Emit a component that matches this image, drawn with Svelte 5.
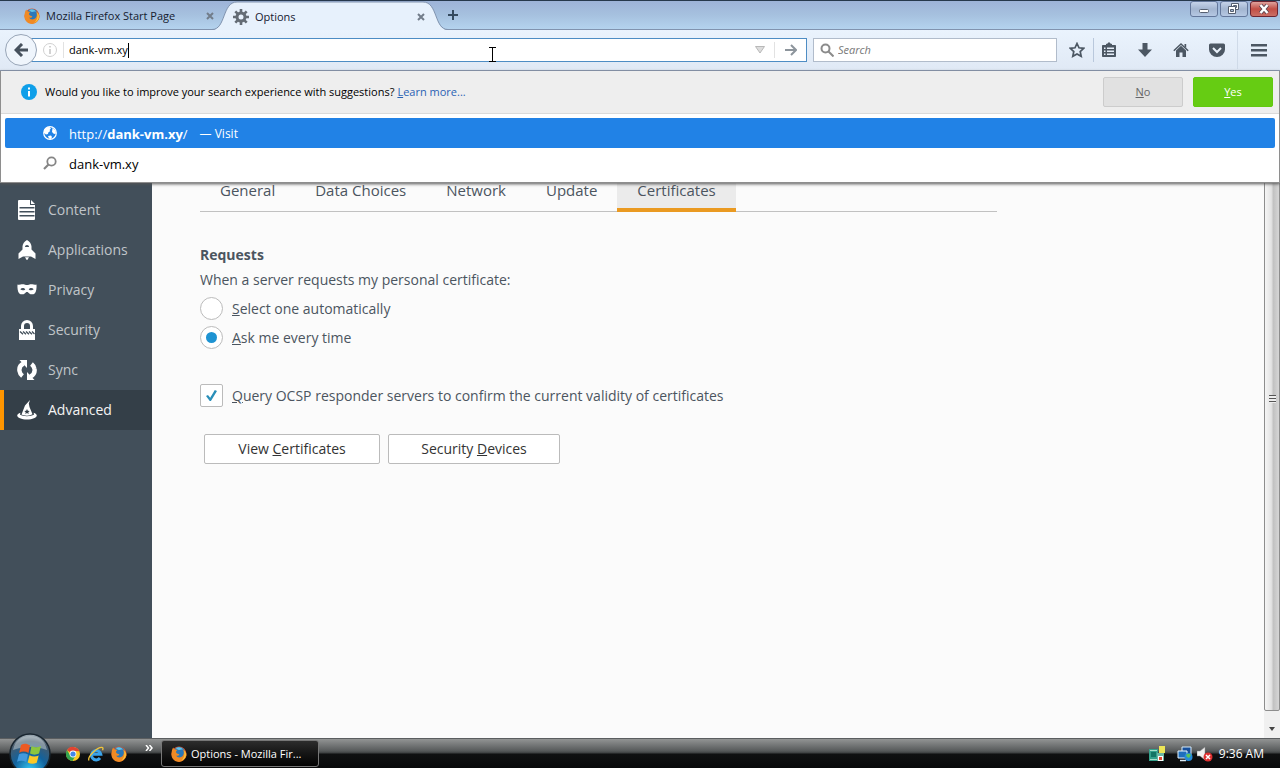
<script lang="ts">
	// Preference categories in the sidebar
	const categories = [
		{ id: 'content', label: 'Content' },
		{ id: 'applications', label: 'Applications' },
		{ id: 'privacy', label: 'Privacy' },
		{ id: 'security', label: 'Security' },
		{ id: 'sync', label: 'Sync' },
		{ id: 'advanced', label: 'Advanced' }
	];
	const panes = ['General', 'Data Choices', 'Network', 'Update', 'Certificates'];

	let category = $state('advanced');
	let pane = $state('Certificates');
	let address = $state('dank-vm.xy');
	let search = $state('');
	let certChoice = $state('ask');
	let ocsp = $state(true);
</script>

{#snippet firefox()}
	<svg class="firefox" viewBox="0 0 16 16" aria-hidden="true">
		<circle cx="8" cy="8" r="7.5" fill="#e4572a" />
		<circle cx="8.2" cy="6.7" r="5.8" fill="#2b78b8" />
		<path d="M5 2c3-1.500 6-.5 7 2-2-1-3 .2-4 0S5.500 3 5 2z" fill="#62c3e8" />
		<path d="M.6 7C.8 4 1.500 2.500 2.300 1.600c.2 1 .7 1.400 1.300 1.700 1 .2 2 .2 2.700.8-.7.600-1.500 1.200-1.200 2.400.4 1.400 2.500 1 3.200 1.900-.5 1.500-2.300 1.600-3.300 1.200 1.500 2.500 5 2.400 6.800.2 1.500-2 1.200-4.500.1-6.600 2.500 1.600 3.900 4 3.500 6.600A7.500 7.500 0 0 1 .6 7z" fill="#f08a24" />
		<path d="M13 4.300c2 2 2.600 5 .9 7.500-1 1.500-2.300 2.500-4 3 3-2 4.500-5.500 3.100-10.500z" fill="#fbc93c" />
	</svg>
{/snippet}

{#snippet categoryIcon(id: string)}
	<svg class="cat-icon" viewBox="0 0 20 20" fill="currentColor" aria-hidden="true">
		{#if id === 'content'}
			<path d="M2 0h11v5h5v14a1 1 0 0 1-1 1H2a1 1 0 0 1-1-1V1a1 1 0 0 1 1-1zM2.500 7v1.500h15V7zm0 4v1.500h15V11zm0 4v1.500h15V15z" fill-rule="evenodd" />
			<path d="M14 0l4 4h-4z" />
		{:else if id === 'applications'}
			<path d="M10 0c2.500 1.400 4.500 4 4.500 6.500V9.500l4 4V19L14 16.500H6L1.500 19v-5.500l4-4V6.500C5.500 4 7.500 1.400 10 0z" />
			<path d="M8 7c0-1.300.8-2 2-2s2 .7 2 2z" fill="#424f5a" />
			<path d="M8 17.300h4l-2 3.200z" />
		{:else if id === 'privacy'}
			<path fill-rule="evenodd" d="M.5 4.500c1.300.6 2 .2 4-.2C7 3.900 8.500 5 10 5s3-1.100 5.500-.7c2 .4 2.700.8 4 .2.3 3-.2 7.200-1.600 8.700-1.500 1.500-4.300 1.500-5.600.3-.9-.9-1.300-1.500-2.300-1.500s-1.400.6-2.300 1.500c-1.300 1.200-4.100 1.200-5.600-.3C.7 11.700.2 7.500.5 4.500zM3.300 9.200c1.400 1.500 3.400 1.500 5 .2C7 7.500 4.800 7.400 3.300 9.200zm8.400.2c1.600 1.300 3.600 1.300 5-.2-1.500-1.800-3.700-1.700-5 .2z" />
		{:else if id === 'security'}
			<path fill-rule="evenodd" d="M4 9V6a6 6 0 0 1 12 0v3h2v11H2V9zm3 0h6V6a3 3 0 0 0-6 0z" />
			<path d="M3 11.500l3 2.800m0-2.800l3 2.800m0-2.800l3 2.800m0-2.800l3 2.800m0-2.800l2.500 2.500" stroke="#424f5a" stroke-width="1.300" fill="none" />
		{:else if id === 'sync'}
			<path d="M6.500 3.500C3.500 5 2 8 2.500 11c.3 2.300 1.500 3.800 3 5M13.500 16.500c3-1.500 4.500-4.500 4-7.500-.3-2.300-1.500-3.800-3-5" fill="none" stroke="currentColor" stroke-width="4.400" />
			<path d="M2.500 0H10v8zM17.500 20H10v-8z" />
		{:else}
			<path d="M13 0l-1.200 3.600.7 3.400 3 7.300c-2.700 1.800-8.200 1.700-11 .2L8 5.500z" />
			<path d="M3.500 12.800c-2 .6-3.300 1.600-3.300 2.700C.2 17.500 4.500 19.500 10 19.500s9.800-2 9.800-4c0-1.100-1.200-2-3.200-2.700l.5 1.600c-3.500 2.300-10.700 2.300-14.200 0z" />
			<path d="M10 9l.8 1.700 1.900.2-1.400 1.300.4 1.900-1.700-1-1.700 1 .4-1.900-1.400-1.300 1.900-.2z" fill="#343f48" />
		{/if}
	</svg>
{/snippet}

<div class="desktop">
	<header class="titlebar">
		<div class="tab">
			{@render firefox()}
			<span class="tab-title">Mozilla Firefox Start Page</span>
			<button class="tab-close" aria-label="Close tab">
				<svg viewBox="0 0 8 8"><path d="M1 1l6 6M7 1L1 7" /></svg>
			</button>
		</div>
		<div class="tab active">
			<svg class="tab-shape" viewBox="0 0 236 29" preserveAspectRatio="none" aria-hidden="true">
				<path d="M0 29C14 29 10 1 25 1H211C226 1 222 29 236 29Z" fill="#e7f1fc" />
				<path d="M0 28.500C14 28.500 10 1 25 1H211C226 1 222 28.500 236 28.500" fill="none" stroke="#8193ae" />
			</svg>
			<svg class="gear" viewBox="0 0 16 16" aria-hidden="true">
				<circle cx="8" cy="8" r="4" fill="none" stroke="#646c75" stroke-width="3" />
				<path d="M8 0v3.500M8 12.500V16M0 8h3.500M12.500 8H16M2.300 2.300l2.500 2.500M11.200 11.200l2.500 2.500M2.300 13.700l2.500-2.500M11.200 4.800l2.500-2.500" stroke="#646c75" stroke-width="2.600" />
			</svg>
			<span class="tab-title">Options</span>
			<button class="tab-close" aria-label="Close tab">
				<svg viewBox="0 0 8 8"><path d="M1 1l6 6M7 1L1 7" /></svg>
			</button>
		</div>
		<button class="new-tab" aria-label="Open a new tab">
			<svg viewBox="0 0 10 10"><path d="M5 0v10M0 5h10" /></svg>
		</button>
		<div class="window-buttons">
			<button aria-label="Minimize">
				<svg viewBox="0 0 26 14"><rect x="8.500" y="7.500" width="9" height="3" rx="1" fill="#fff" stroke="#555f70" /></svg>
			</button>
			<button aria-label="Restore">
				<svg viewBox="0 0 26 14" fill="#fff" stroke="#555f70">
					<path d="M10.500 1.500h7v6h-7zM12.500 3.500h3v2h-3z" fill-rule="evenodd" />
					<path d="M7.500 4.500h7v7h-7zM9.500 7.500h3v2h-3z" fill-rule="evenodd" />
				</svg>
			</button>
			<button class="close" aria-label="Close">
				<svg viewBox="0 0 26 14">
					<path d="M9.500 3l7 8M16.500 3l-7 8" stroke="#51404d" stroke-width="4" />
					<path d="M9.500 3l7 8M16.500 3l-7 8" stroke="#fff" stroke-width="2.500" />
				</svg>
			</button>
		</div>
	</header>

	<nav class="toolbar">
		<button class="back" aria-label="Go back">
			<svg viewBox="0 0 14 14"><path d="M8 1L2 7l6 6M2 7h12" /></svg>
		</button>
		<div class="urlbar">
			<svg class="identity" viewBox="0 0 14 14" aria-hidden="true">
				<circle cx="7" cy="7" r="6.500" fill="none" stroke="#d0d0d0" />
				<path d="M7 6v5M7 3v1.500" stroke="#c4c4c4" stroke-width="1.500" />
			</svg>
			<div class="url-field">
				<input type="text" class="address" size="10" aria-label="Address" bind:value={address} />
				<span class="caret"></span>
			</div>
			<button class="history" aria-label="Show history">
				<svg viewBox="0 0 10 8"><path d="M.5.5h9L5 7z" fill="#ddd" stroke="#b8b8b8" /></svg>
			</button>
			<button class="go" aria-label="Go">
				<svg viewBox="0 0 12 12"><path d="M6 1l5 5-5 5M0 6h11" /></svg>
			</button>
			<svg class="pointer" viewBox="0 0 9 17" aria-hidden="true">
				<path d="M1 1.500h7M1 15.500h7M4.500 2v13" stroke="#000" />
			</svg>
		</div>
		<div class="searchbar">
			<svg viewBox="0 0 14 14" aria-hidden="true"><circle cx="5.500" cy="5.500" r="4" /><path d="M8.500 8.500l5 5" /></svg>
			<input type="text" placeholder="Search" aria-label="Search" bind:value={search} />
		</div>
		<div class="tools">
			<button class="tool star" aria-label="Bookmark this page">
				<svg viewBox="0 0 16 16"><path d="M8 1.500l2 4.300 4.700.5-3.500 3.200 1 4.800L8 11.900l-4.200 2.400 1-4.800L1.300 6.300 6 5.800z" fill="none" stroke="#4c5763" stroke-width="1.700" /></svg>
			</button>
			<button class="tool bookmarks" aria-label="Show your bookmarks">
				<svg viewBox="0 0 16 16"><path fill-rule="evenodd" d="M5 2l1.500-.5L8 0l1.500 1.500L11 2v1h3.200a.8.800 0 0 1 .8.800v10.400a.8.800 0 0 1-.8.800H1.800a.8.800 0 0 1-.8-.8V3.800A.8.800 0 0 1 1.800 3H5zM3 5.500V7h1.500V5.500zm3 0V7h7V5.500zm-3 3V10h1.500V8.500zm3 0V10h7V8.500zm-3 3V13h1.500v-1.500zm3 0V13h7v-1.500z" /></svg>
			</button>
			<button class="tool" aria-label="Downloads">
				<svg viewBox="0 0 16 16"><path d="M5.500 1h5v6.500H15L8 15 1 7.500h4.500z" /></svg>
			</button>
			<button class="tool" aria-label="Home">
				<svg viewBox="0 0 16 16"><path d="M8 3.800l5 4.700V15H9.500v-4.500h-3V15H3V8.500z" /><path d="M.8 8.800L8 2l7.200 6.800" fill="none" stroke="#4c5763" stroke-width="1.500" /><path d="M11.500 2h1.700v4l-1.700-1.500z" /></svg>
			</button>
			<button class="tool" aria-label="Save to Pocket">
				<svg viewBox="0 0 16 16"><path d="M1.500 1.500h13A1.500 1.500 0 0 1 16 3v4.500a8 7.500 0 0 1-16 0V3a1.500 1.500 0 0 1 1.500-1.500z" /><path d="M4 6l4 4 4-4" fill="none" stroke="#eaf2fb" stroke-width="2" /></svg>
			</button>
			<button class="tool menu" aria-label="Open menu">
				<svg viewBox="0 0 16 16"><path d="M0 2h16v2.500H0zM0 7h16v2.500H0zM0 12h16v2.500H0z" /></svg>
			</button>
		</div>
	</nav>

	<main class="viewport">
		<!-- Address bar results, open over the page -->
		<section class="popup">
			<div class="notice">
				<svg class="info" viewBox="0 0 16 16" aria-hidden="true">
					<circle cx="8" cy="8" r="8" fill="#0f9fe9" />
					<path d="M8 7v5.500M8 3.500v2" stroke="#fff" stroke-width="2" />
				</svg>
				<span>Would you like to improve your search experience with suggestions?</span>
				<a href="#learn"><u>L</u>earn more...</a>
				<div class="notice-buttons">
					<button><u>N</u>o</button>
					<button class="yes"><u>Y</u>es</button>
				</div>
			</div>
			<ul class="results">
				<li class="selected">
					<svg viewBox="0 0 14 14" aria-hidden="true">
						<circle cx="7" cy="7" r="6.300" fill="none" stroke="#fff" stroke-width="1.200" />
						<path d="M1 4c1-2 3-3.200 5.500-3L8 2.500 6.500 4l.8 1-2 1.500-.3 1.500-2 .5L1 7zM9.500 2l3 2.500.5 3-2 .5-2-2zM5 10l3-.5 1 1.500L8 13l-2-.5z" fill="#fff" />
					</svg>
					<span>http://<b>dank-vm.xy</b>/</span>
					<span class="action">— Visit</span>
				</li>
				<li>
					<svg viewBox="0 0 14 14" aria-hidden="true"><circle cx="8.500" cy="5.500" r="4.200" fill="none" stroke="#858585" stroke-width="1.800" /><path d="M5.500 8.500L1 13" stroke="#858585" stroke-width="2.200" /></svg>
					<span>dank-vm.xy</span>
				</li>
			</ul>
		</section>

		<aside class="sidebar">
			{#each categories as item (item.id)}
				<button class="category" class:current={category === item.id} onclick={() => (category = item.id)}>
					{@render categoryIcon(item.id)}
					<span>{item.label}</span>
				</button>
			{/each}
		</aside>

		<div class="page">
			<div class="panes" role="tablist">
				{#each panes as name}
					<button role="tab" aria-selected={pane === name} class:current={pane === name} onclick={() => (pane = name)}>{name}</button>
				{/each}
			</div>

			<h2>Requests</h2>
			<p>When a server requests my personal certificate:</p>
			<label class="option">
				<input type="radio" name="cert" value="auto" bind:group={certChoice} />
				<span><u>S</u>elect one automatically</span>
			</label>
			<label class="option">
				<input type="radio" name="cert" value="ask" bind:group={certChoice} />
				<span><u>A</u>sk me every time</span>
			</label>
			<label class="option ocsp">
				<input type="checkbox" bind:checked={ocsp} />
				<span><u>Q</u>uery OCSP responder servers to confirm the current validity of certificates</span>
			</label>
			<div class="actions">
				<button>View <u>C</u>ertificates</button>
				<button>Security <u>D</u>evices</button>
			</div>
		</div>

		<div class="scrollbar">
			<div class="thumb"><span class="grip"></span></div>
			<svg viewBox="0 0 6 4" aria-hidden="true"><path d="M0 0h6L3 4z" fill="#444" /></svg>
		</div>
	</main>

	<footer class="taskbar">
		<button class="start" aria-label="Start">
			<svg viewBox="0 0 42 42">
				<defs>
					<radialGradient id="orb" cx="50%" cy="90%" r="90%">
						<stop offset="0" stop-color="#35c8f4" />
						<stop offset="0.450" stop-color="#12629d" />
						<stop offset="0.800" stop-color="#465a6c" />
						<stop offset="1" stop-color="#a9b5bd" />
					</radialGradient>
				</defs>
				<circle cx="21" cy="21" r="20" fill="url(#orb)" stroke="#18252f" stroke-width="1.500" />
				<path d="M4 17C6 7 13 3 21 3s15 4 17 14c-10-4-24-4-34 0z" fill="#d5dde0" opacity="0.450" />
				<path d="M12 12c3-2 6-1.500 9 .3L19.500 20c-3-1.700-6-2-9.300-.3z" fill="#ec5a24" />
				<path d="M22.500 13c3 1.500 6 1.800 9.500 0l-2 7.500c-3 1.500-6 1.500-9 0z" fill="#8cc63e" />
				<path d="M10 21.300c3-1.600 6-1.400 9 .3l-1.800 7.500c-3-1.800-6-1.900-9.200-.3z" fill="#4299dc" />
				<path d="M20.500 22.300c3 1.600 6 1.700 9.200.2l-2 7.300c-3 1.500-6 1.300-9-.2z" fill="#fdc926" />
			</svg>
		</button>
		<div class="quick">
			<button aria-label="Chrome">
				<svg viewBox="0 0 16 16">
					<circle cx="8" cy="8" r="7" fill="#fbc926" />
					<path d="M8 8L2 4.300A7 7 0 0 1 14.500 5.200L8 5z" fill="#e04333" />
					<path d="M2 4.300A7 7 0 0 0 7.500 15l3-5.500L8 11 5.300 9.500z" fill="#32a350" />
					<circle cx="8" cy="8" r="3.400" fill="#fff" />
					<circle cx="8" cy="8" r="2.600" fill="#4387ea" />
				</svg>
			</button>
			<button aria-label="Internet Explorer">
				<svg viewBox="0 0 16 16" fill="none">
					<path d="M3.800 8.300h9A4.700 4.700 0 1 0 12 12" stroke="#3aa3ea" stroke-width="3" />
					<path d="M1 14.500C-1 11 9 1 14 1.300c1.500.2 1 2 .5 3" stroke="#f2c53a" stroke-width="1.300" />
				</svg>
			</button>
			<button aria-label="Firefox">{@render firefox()}</button>
		</div>
		<button class="more" aria-label="More shortcuts">
			<svg viewBox="0 0 8 6"><path d="M1 0l2.500 3L1 6M4.500 0L7 3 4.500 6" fill="none" stroke="#fff" stroke-width="1.500" /></svg>
		</button>
		<button class="task">
			{@render firefox()}
			<span>Options - Mozilla Fir...</span>
		</button>
		<div class="tray">
			<svg viewBox="0 0 16 16" aria-hidden="true">
				<path d="M0 3h9v12H0z" fill="#35a18c" />
				<path d="M1 4.500h7M1 13.500h9" stroke="#a7dfcb" />
				<path d="M2 6h5v5H2z" fill="#147565" />
				<path d="M10 0h6v7h-6z" fill="#ece557" />
				<path d="M8 7h7v8H8z" fill="#6cb7a3" />
				<path d="M9 10h5v5H9z" fill="#fff" />
				<path d="M10 11h3v3h-3z" fill="#df4a31" />
			</svg>
			<svg class="network" viewBox="0 0 16 16" aria-hidden="true">
				<path d="M5 1h9v8H5z" fill="#174f9b" stroke="#d8ecfa" />
				<path d="M1 5h9v7H1z" fill="#1f6fbd" stroke="#e7f5ff" />
				<path d="M3 14.500h6" stroke="#dcebf5" stroke-width="1.500" />
				<circle cx="11.500" cy="11" r="4" fill="#268bd8" />
				<path d="M9 9c2-2 4-1 5 0l-2 3-2-1z" fill="#5bc45b" />
			</svg>
			<svg viewBox="0 0 16 16" aria-hidden="true">
				<path d="M0 5h3l5-4v13l-5-4H0z" fill="#f1f1f1" stroke="#888" stroke-width="0.500" />
				<circle cx="11" cy="11" r="4.500" fill="#df3030" />
				<path d="M9 9l4 4M13 9l-4 4" stroke="#fff" stroke-width="1.500" />
			</svg>
			<time>9:36 AM</time>
		</div>
	</footer>
</div>

<style>
	:global(body) {
		margin: 0;
	}

	.desktop {
		display: flex;
		flex-direction: column;
		height: 100vh;
		overflow: hidden;
		font-family: 'Open Sans', 'Noto Sans', sans-serif;
		font-size: 11px;
		line-height: 16px;
		color: #000;
	}

	button,
	input {
		font: inherit;
		color: inherit;
		border: 0;
		padding: 0;
		margin: 0;
		background: none;
	}

	button {
		display: flex;
		align-items: center;
		justify-content: center;
		white-space: pre;
	}

	svg {
		display: block;
		flex: none;
	}

	.firefox,
	.gear {
		width: 16px;
		height: 16px;
	}

	/* Title bar and tabs */
	.titlebar {
		display: flex;
		height: 30px;
		box-sizing: border-box;
		border-top: 1px solid #26384c;
		border-bottom: 1px solid #8193ae;
		background: linear-gradient(#9db3d8, #a6c1df 50%, #b4d3ee);
	}

	.tab {
		display: flex;
		align-items: center;
		gap: 6px;
		width: 212px;
		box-sizing: border-box;
		padding: 2px 0 0 24px;
		color: #15202f;
	}

	.tab.active {
		position: relative;
		width: 236px;
		height: 29px;
		padding: 2px 23px 0 21px;
	}

	.tab.active > :not(.tab-shape) {
		z-index: 1;
	}

	.tab-shape {
		position: absolute;
		inset: 0;
		width: 100%;
		height: 100%;
	}

	.tab-title {
		flex: 1;
		white-space: nowrap;
	}

	.tab:not(.active) .tab-close {
		margin-right: -2px;
	}

	.tab-close svg {
		width: 8px;
		height: 8px;
		stroke: #727d8a;
		stroke-width: 2;
	}

	.new-tab svg {
		width: 10px;
		height: 10px;
		stroke: #34495e;
		stroke-width: 2;
	}

	.window-buttons {
		display: flex;
		gap: 2px;
		margin: 0 2px 0 auto;
		height: 16px;
	}

	.window-buttons button {
		width: 28px;
		box-sizing: border-box;
		border: 1px solid #63779b;
		border-radius: 3px;
		background: linear-gradient(#c5d3e9, #a3b5d0 50%, #b5c8e3);
	}

	.window-buttons svg {
		width: 26px;
		height: 14px;
	}

	.window-buttons .close {
		border-color: #6d2430;
		background: linear-gradient(#dfa29d, #c14e45 50%, #cb6f65);
	}

	/* Navigation toolbar */
	.toolbar {
		display: flex;
		align-items: center;
		height: 40px;
		border-bottom: 1px solid #8c9bb4;
		background: linear-gradient(#eaf3fd, #e0e9f5);
	}

	.back {
		z-index: 1;
		width: 32px;
		height: 32px;
		margin-left: 5px;
		box-sizing: border-box;
		border: 1px solid #98a5b7;
		border-radius: 50%;
		background: #eff5fc;
	}

	.back svg {
		width: 14px;
		height: 14px;
		fill: none;
		stroke: #46515d;
		stroke-width: 3;
	}

	.urlbar {
		position: relative;
		display: flex;
		align-items: center;
		flex: 763;
		height: 24px;
		box-sizing: border-box;
		margin-left: -6px;
		padding-left: 11px;
		border: 1px solid #4e8dc4;
		background: #fff;
	}

	.identity {
		width: 14px;
		height: 14px;
	}

	.url-field {
		display: flex;
		align-items: center;
		flex: 1;
		margin-left: 6px;
		padding-left: 5px;
		border-left: 1px solid #e2e2e2;
	}

	.address {
		field-sizing: content;
		outline: none;
	}

	.caret {
		width: 1px;
		height: 15px;
		background: #000;
	}

	.history svg {
		width: 10px;
		height: 8px;
	}

	.go {
		width: 32px;
		height: 16px;
		margin-left: 9px;
		border-left: 1px solid #e2e2e2;
	}

	.go svg {
		width: 12px;
		height: 12px;
		fill: none;
		stroke: #8d959c;
		stroke-width: 2;
	}

	/* Text cursor hovering over the address bar */
	.pointer {
		position: absolute;
		top: 7px;
		left: 456px;
		width: 9px;
		height: 17px;
	}

	.searchbar {
		display: flex;
		align-items: center;
		gap: 4px;
		flex: 230;
		height: 24px;
		box-sizing: border-box;
		margin-left: 6px;
		padding: 0 6px;
		border: 1px solid #b1bccb;
		background: #fff;
	}

	.searchbar svg {
		width: 14px;
		height: 14px;
		fill: none;
		stroke: #8b8b8b;
		stroke-width: 2;
	}

	.searchbar input {
		flex: 1;
		min-width: 0;
		outline: none;
	}

	.searchbar input::placeholder {
		color: #777;
		font-style: italic;
	}

	.tools {
		display: flex;
		align-items: center;
		margin-left: 3px;
	}

	.tool {
		width: 36px;
		height: 24px;
	}

	.tool svg {
		width: 16px;
		height: 16px;
		fill: #4c5763;
	}

	.tool.star {
		width: 34px;
		border-right: 1px solid #b9c8dc;
		box-sizing: border-box;
	}

	.tool.bookmarks {
		width: 33px;
		padding-right: 3px;
		box-sizing: border-box;
	}

	.tool.menu {
		width: 43px;
		height: 38px;
		margin-left: 2px;
		box-sizing: border-box;
		border-left: 1px solid #cfdae8;
	}

	/* Page area */
	.viewport {
		position: relative;
		display: flex;
		flex: 1;
		min-height: 0;
		background: #fbfbfb;
	}

	.popup {
		position: absolute;
		z-index: 2;
		top: 0;
		left: 0;
		right: 0;
		box-sizing: border-box;
		border: 1px solid #8e8e8e;
		border-top: 0;
		background: #fff;
		box-shadow: 0 1px 3px #555;
	}

	.notice {
		display: flex;
		align-items: center;
		height: 42px;
		padding: 0 6px 0 20px;
		border-bottom: 1px solid #dadada;
		background: #eee;
	}

	.info {
		width: 16px;
		height: 16px;
		margin-right: 8px;
	}

	.notice a {
		margin-left: 3px;
		color: #2a62b4;
		text-decoration: none;
	}

	.notice-buttons {
		display: flex;
		gap: 10px;
		margin-left: auto;
	}

	.notice-buttons button {
		width: 80px;
		height: 30px;
		border: 1px solid #ccc;
		border-radius: 2px;
		box-sizing: border-box;
		background: #e1e1e1;
		color: #666;
	}

	.notice-buttons .yes {
		border-color: #62c90f;
		background: #66cc13;
		color: #fff;
	}

	.results {
		display: flex;
		flex-direction: column;
		margin: 0;
		padding: 4px;
		list-style: none;
		font-size: 13px;
	}

	.results li {
		display: flex;
		align-items: center;
		height: 30px;
		padding-left: 38px;
		border-radius: 2px;
	}

	.results span {
		padding-top: 2px;
	}

	.results svg {
		width: 14px;
		height: 14px;
		margin-right: 12px;
	}

	.results .selected {
		background: #2182e6;
		color: #fff;
	}

	.results .action {
		margin-left: 12px;
		font-size: 12px;
	}

	.sidebar {
		width: 152px;
		padding-top: 119px;
		box-sizing: border-box;
		background: #424f5a;
		font-size: 14px;
	}

	.category {
		justify-content: flex-start;
		gap: 11px;
		width: 100%;
		height: 40px;
		padding-left: 17px;
		color: #c0c5c9;
	}

	.category.current {
		padding-left: 13px;
		border-left: 4px solid #ff9500;
		background: #343f48;
		color: #f4f4f4;
	}

	.cat-icon {
		width: 20px;
		height: 20px;
		color: #fff;
	}

	.page {
		flex: 1;
		padding: 100px 48px 0;
		font-size: 14px;
		line-height: 20px;
		color: #4b555f;
	}

	.panes {
		display: flex;
		max-width: 797px;
		height: 40px;
		border-bottom: 1px solid #c1c1c1;
		font-size: 15px;
	}

	.panes button {
		padding: 0 20px;
		height: 41px;
		box-sizing: border-box;
		border-bottom: 4px solid transparent;
	}

	.panes .current {
		border-bottom-color: #ea9a22;
		background: #ebebeb;
	}

	h2 {
		margin: 33px 0 5px;
		font-size: 14px;
		line-height: 20px;
	}

	p {
		margin: 0 0 4px;
	}

	.option {
		display: flex;
		align-items: center;
		gap: 9px;
		width: fit-content;
		height: 29px;
	}

	.option input {
		display: grid;
		place-items: center;
		appearance: none;
		box-sizing: border-box;
		width: 23px;
		height: 23px;
		border: 1px solid #bbb;
		border-radius: 2px;
		background: #fff;
	}

	.option input[type='radio'] {
		border-radius: 50%;
	}

	.option input[type='radio']:checked::before {
		content: '';
		width: 11px;
		height: 11px;
		border-radius: 50%;
		background: #1e93d2;
	}

	.option input[type='checkbox']:checked::before {
		content: '';
		width: 11px;
		height: 11px;
		background: #2a8fb9;
		clip-path: polygon(0 55%, 18% 45%, 38% 70%, 80% 0, 100% 8%, 45% 100%, 34% 100%);
	}

	.ocsp {
		margin-top: 29px;
	}

	.actions {
		display: flex;
		gap: 8px;
		margin: 24px 4px 0;
	}

	.actions button {
		height: 30px;
		width: 176px;
		box-sizing: border-box;
		border: 1px solid #bbb;
		border-radius: 2px;
		background: #fff;
		color: #333;
	}

	.actions button + button {
		width: 172px;
	}

	.scrollbar {
		display: flex;
		flex-direction: column;
		align-items: center;
		width: 16px;
		background: #f0f0f0;
	}

	.thumb {
		display: flex;
		align-items: center;
		justify-content: center;
		flex: 1;
		width: 100%;
		margin-top: 16px;
		box-sizing: border-box;
		border: 1px solid #8d8d8d;
		border-radius: 2px;
		background: linear-gradient(90deg, #f5f5f5, #e3e3e3 45%, #c2c2c2 60%, #d6d6d6);
	}

	.grip {
		width: 7px;
		height: 8px;
		background: repeating-linear-gradient(#555 0 1px, #eee 1px 3px);
	}

	.scrollbar svg {
		width: 6px;
		height: 4px;
		margin: 16px 0 7px;
	}

	/* Taskbar */
	.taskbar {
		z-index: 3;
		display: flex;
		align-items: center;
		height: 29px;
		border-top: 1px solid #5b5e60;
		background: linear-gradient(#929494, #56595a 12px, #3c3f40 14px, #101112 15px, #08090a);
		color: #fff;
	}

	.start {
		align-self: flex-start;
		margin: -6px 0 0 9px;
	}

	.start svg {
		width: 42px;
		height: 42px;
	}

	.quick {
		display: flex;
		gap: 7px;
		margin-left: 14px;
	}

	.quick svg {
		width: 16px;
		height: 16px;
	}

	.more {
		align-self: flex-start;
		margin: 6px 8px 0 18px;
	}

	.more svg {
		width: 8px;
		height: 6px;
	}

	.task {
		justify-content: flex-start;
		gap: 4px;
		width: 158px;
		height: 27px;
		padding-left: 9px;
		box-sizing: border-box;
		border: 1px solid #777;
		border-radius: 3px;
		background: linear-gradient(#2d2d2d, #151515 50%, #030303);
	}

	.tray {
		display: flex;
		align-items: center;
		gap: 4px;
		margin: 0 16px 0 auto;
	}

	.tray svg {
		width: 16px;
		height: 16px;
	}

	.tray .network {
		margin-left: 8px;
	}

	.tray time {
		margin-left: 2px;
		font-size: 12px;
	}
</style>
